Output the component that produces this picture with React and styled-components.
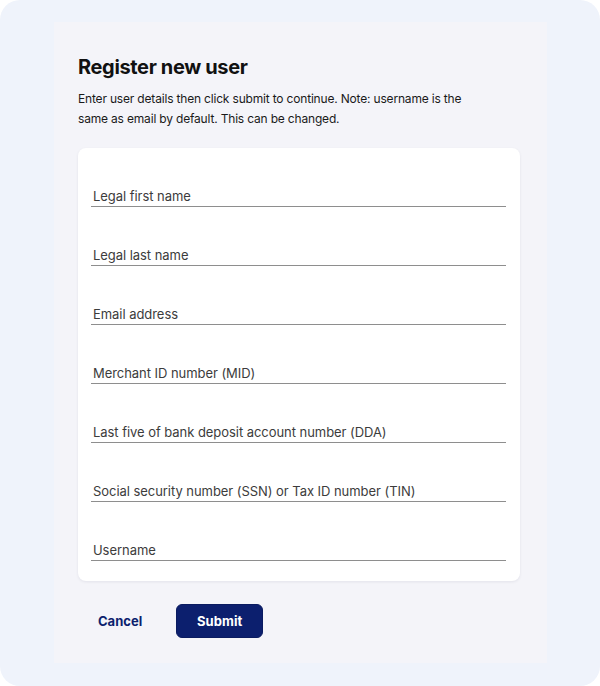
import React from "react";
import styled, { createGlobalStyle } from "styled-components";

const Global = createGlobalStyle`
  html, body { margin: 0; padding: 0; background: #ffffff; }
  body { font-family: "Inter", "Liberation Sans", sans-serif; }
  * { box-sizing: border-box; }
`;

const Frame = styled.div`
  width: 600px;
  height: 686px;
  background: #eff3fb;
  border-radius: 20px;
  padding: 22px 53px 23px 54px;
`;

const Panel = styled.div`
  height: 100%;
  background: #f4f4f9;
  padding: 33px 27px 0 24px;
  display: flex;
  flex-direction: column;
`;

const Title = styled.h1`
  margin: 0;
  font-size: 20px;
  line-height: 24px;
  font-weight: 700;
  color: #111111;
  letter-spacing: -0.35px;
`;

const Intro = styled.p`
  margin: 10px 0 0 0;
  font-size: 12px;
  line-height: 20px;
  color: #1a1a1a;
  letter-spacing: -0.18px;
  max-width: 400px;
`;

const Card = styled.div`
  margin-top: 19px;
  background: #ffffff;
  border-radius: 8px;
  box-shadow: 0 1px 3px rgba(20, 30, 60, 0.08);
  padding: 0 14px 20px 13px;
`;

const Field = styled.label`
  display: flex;
  align-items: flex-end;
  height: 59px;
  border-bottom: 1.5px solid #8e8e8e;
  padding: 0 2px 2px;
`;

const FieldLabel = styled.span`
  font-size: 13px;
  line-height: 16px;
  color: #3c3c3c;
  letter-spacing: -0.05px;
`;

const Actions = styled.div`
  display: flex;
  align-items: center;
  gap: 14px;
  margin-top: 23px;
`;

const TextButton = styled.button`
  border: none;
  background: transparent;
  font-family: inherit;
  font-size: 13px;
  font-weight: 700;
  color: #0c1f6e;
  height: 34px;
  padding: 0 20px;
  cursor: pointer;
`;

const PrimaryButton = styled.button`
  border: 1px solid #0a1b60;
  background: #0c1f6e;
  font-family: inherit;
  font-size: 13px;
  font-weight: 700;
  color: #ffffff;
  height: 34px;
  width: 87px;
  border-radius: 6px;
  letter-spacing: 0.1px;
  cursor: pointer;
`;

const fields = [
  "Legal first name",
  "Legal last name",
  "Email address",
  "Merchant ID number (MID)",
  "Last five of bank deposit account number (DDA)",
  "Social security number (SSN) or Tax ID number (TIN)",
  "Username",
];

export default function App() {
  return (
    <>
      <Global />
      <Frame>
        <Panel>
          <Title>Register new user</Title>
          <Intro>
            Enter user details then click submit to continue. Note: username is the
            same as email by default. This can be changed.
          </Intro>
          <Card>
            {fields.map((f) => (
              <Field key={f}>
                <FieldLabel>{f}</FieldLabel>
              </Field>
            ))}
          </Card>
          <Actions>
            <TextButton>Cancel</TextButton>
            <PrimaryButton>Submit</PrimaryButton>
          </Actions>
        </Panel>
      </Frame>
    </>
  );
}
